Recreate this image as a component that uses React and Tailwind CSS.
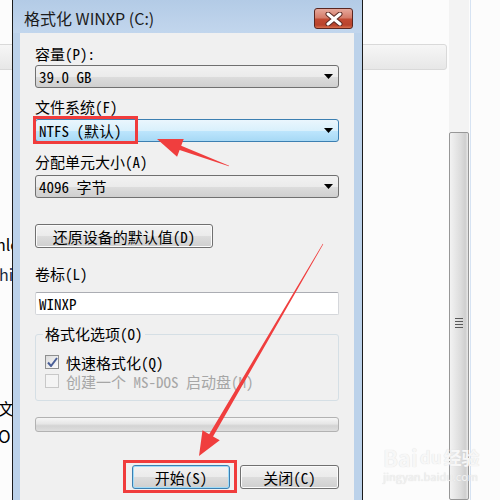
import React from "react";

const mono = "font-['Noto_Sans_Mono_CJK_SC','Noto_Sans_CJK_SC',monospace]";
const sans = "font-['Noto_Sans_CJK_SC','Noto_Sans',sans-serif]";

const arrowPoints = (tx, ty, hx, hy, headLen, headHalf, tailW, shaftW) => {
  const dx = hx - tx;
  const dy = hy - ty;
  const len = Math.hypot(dx, dy);
  const ux = dx / len;
  const uy = dy / len;
  const px = -uy;
  const py = ux;
  const bx = hx - ux * headLen;
  const by = hy - uy * headLen;
  const pts = [
    [tx + (px * tailW) / 2, ty + (py * tailW) / 2],
    [bx + (px * shaftW) / 2, by + (py * shaftW) / 2],
    [bx + px * headHalf, by + py * headHalf],
    [hx, hy],
    [bx - px * headHalf, by - py * headHalf],
    [bx - (px * shaftW) / 2, by - (py * shaftW) / 2],
    [tx - (px * tailW) / 2, ty - (py * tailW) / 2],
  ];
  return pts.map((p) => p.join(",")).join(" ");
};

const Combo = ({ value, focused }) => (
  <div
    className={`flex h-[23px] items-center justify-between rounded-[3px] border pl-[3px] pr-[5px] ${
      focused
        ? "border-[#3c7fb1] bg-[linear-gradient(#eaf6fd_0%,#d9f0fc_50%,#bee6fd_50%,#a7d9f5_100%)]"
        : "border-[#707070] bg-[linear-gradient(#f2f2f2_0%,#ebebeb_50%,#dddddd_50%,#cfcfcf_100%)]"
    }`}
  >
    <span className="text-[15px] leading-none text-black">{value}</span>
    <svg width="9" height="5" viewBox="0 0 9 5">
      <path d="M0 0h9L4.5 5z" fill="#000" />
    </svg>
  </div>
);

const Button = ({ children, width, isDefault }) => (
  <div
    className={`flex h-[24px] items-center justify-center rounded-[3px] border text-[15px] leading-none text-black ${width} ${
      isDefault
        ? "border-[#3c7fb1] shadow-[inset_0_0_0_1px_#9fdcf9] bg-[linear-gradient(#f2f2f2_0%,#ebebeb_50%,#dddddd_50%,#cfcfcf_100%)]"
        : "border-[#707070] shadow-[inset_0_0_0_1px_#fbfbfb] bg-[linear-gradient(#f2f2f2_0%,#ebebeb_50%,#dddddd_50%,#cfcfcf_100%)]"
    }`}
  >
    {children}
  </div>
);

const Checkbox = ({ checked, disabled, label }) => (
  <div className="flex h-[18px] items-center gap-[7px]">
    <div
      className={`flex h-[14px] w-[14px] items-center justify-center border ${
        disabled ? "border-[#c8c8c8] bg-[#f4f4f4]" : "border-[#8e8f8f] bg-[linear-gradient(135deg,#dcdcdc,#fbfbfb)]"
      }`}
    >
      {checked && (
        <svg width="11" height="10" viewBox="0 0 11 10">
          <path d="M1 5.5l3 3.5L10 1" fill="none" stroke="#4a5f97" strokeWidth="2" />
        </svg>
      )}
    </div>
    <span className={`text-[15px] leading-none ${disabled ? "text-[#a6a6a6]" : "text-black"}`}>{label}</span>
  </div>
);

export default function App() {
  return (
    <div className="relative h-[500px] w-[500px] overflow-hidden bg-[#fcfcfc]">
      {/* background window bits */}
      <div className="absolute left-[-10px] top-[44px] h-[26px] w-[457px] rounded-[3px] border border-[#d9d9d9] bg-[linear-gradient(#f6f6f6,#e7e7e7)]" />
      <div className={`absolute left-[-4px] top-[232px] text-[16px] text-black ${sans}`}>hlo</div>
      <div className={`absolute left-[-1px] top-[262px] text-[16px] text-[#1a2a40] ${sans}`}>hi</div>
      <div className={`absolute left-[-2px] top-[396px] text-[16px] text-black ${sans}`}>文</div>
      <div className={`absolute left-[-2px] top-[423px] text-[17px] text-black ${sans}`}>O</div>

      {/* scrollbar of window behind */}
      <div className="absolute left-[449px] top-0 flex h-[500px] w-[20px] flex-col bg-[#f3f3f3]">
        <div className="h-[132px]" />
        <div className="flex flex-1 items-start justify-center rounded-[2px] border border-[#979797] bg-[linear-gradient(90deg,#f2f2f2,#dcdcdc_60%,#cfcfcf_85%,#e8e8e8)] pt-[185px]">
          <div className="flex flex-col gap-[2px]">
            <div className="h-px w-[8px] bg-[#5a5a5a]" />
            <div className="h-px w-[8px] bg-[#5a5a5a]" />
            <div className="h-px w-[8px] bg-[#5a5a5a]" />
            <div className="h-px w-[8px] bg-[#5a5a5a]" />
          </div>
        </div>
      </div>
      <div className="absolute left-[470px] top-0 h-[500px] w-px bg-[#d6e3f3]" />

      {/* dialog window */}
      <div className={`absolute left-[12px] top-0 flex h-[520px] w-[351px] flex-col border-x border-x-[#1b1b1b] bg-[#bcd2ea] ${mono}`}>
        <div className="flex h-[33px] items-start justify-between bg-[linear-gradient(#b3cbe6,#c2d6ed)]">
          <div className={`pl-[11px] pt-[9px] text-[16px] leading-[18px] text-[#1c1c1c] ${sans}`}>格式化 WINXP (C:)</div>
          <div className="mr-[9px] mt-[8px] flex h-[21px] w-[39px] items-center justify-center rounded-[3px] border border-[#5a2620] bg-[linear-gradient(#e6a89b_0%,#d57d6b_45%,#c14a33_55%,#b8432c_85%,#d8704f_100%)]">
            <svg width="18" height="14" viewBox="0 0 18 14">
              <path d="M3 2l12 10M15 2L3 12" stroke="#5b2a24" strokeWidth="5" strokeLinecap="round" />
              <path d="M3 2l12 10M15 2L3 12" stroke="#ffffff" strokeWidth="3" strokeLinecap="round" />
            </svg>
          </div>
        </div>

        <div className="ml-[7px] mr-[8px] flex flex-1 flex-col bg-[#f0f0f0] px-[15px] pt-[12px]">
          <div className="h-[18px] text-[15px] leading-[18px] text-black">容量(P):</div>
          <div className="mt-[2px]">
            <Combo value="39.0 GB" />
          </div>
          <div className="mt-[10px] h-[18px] text-[15px] leading-[18px] text-black">文件系统(F)</div>
          <div className="mt-[3px]">
            <Combo value="NTFS (默认)" focused />
          </div>
          <div className="mt-[11px] h-[18px] text-[15px] leading-[18px] text-black">分配单元大小(A)</div>
          <div className="mt-[4px]">
            <Combo value="4096 字节" />
          </div>
          <div className="mt-[26px] flex">
            <Button width="w-[178px]">还原设备的默认值(D)</Button>
          </div>
          <div className="mt-[17px] h-[18px] text-[15px] leading-[18px] text-black">卷标(L)</div>
          <div className="mt-[9px] flex h-[23px] items-center rounded-[2px] border border-[#d5d7db] border-t-[#abadb3] bg-white pl-[3px] text-[15px] leading-none text-black">
            WINXP
          </div>
          <fieldset className="mt-[10px] h-[76px] rounded-[3px] border border-[#d5dfe5] pl-[9px]">
            <legend className="ml-[-2px] px-[2px] text-[15px] leading-[18px] text-black">格式化选项(O)</legend>
            <div className="mt-[10px] flex flex-col gap-[1px]">
              <Checkbox checked label="快速格式化(Q)" />
              <Checkbox disabled label="创建一个 MS-DOS 启动盘(M)" />
            </div>
          </fieldset>
          <div className="mt-[16px] h-[15px] rounded-[3px] border border-[#b2b2b2] bg-[linear-gradient(#f6f6f6_0%,#e6e6e6_45%,#d3d3d3_60%,#dedede_100%)]" />
          <div className="mt-[33px] flex justify-end gap-[10px]">
            <Button width="w-[98px]" isDefault>开始(S)</Button>
            <Button width="w-[99px]">关闭(C)</Button>
          </div>
        </div>
      </div>

      {/* annotations */}
      <div className="absolute left-[33px] top-[116px] h-[28px] w-[105px] border-[3px] border-[#f03c3c]" />
      <div className="absolute left-[123px] top-[460px] h-[33px] w-[114px] border-[3px] border-[#f03c3c]" />
      <svg className="pointer-events-none absolute left-0 top-0" width="500" height="500" viewBox="0 0 500 500">
        <polygon points={arrowPoints(229, 166, 157, 139, 25, 9.5, 0.8, 4.5)} fill="#f03e3e" />
        <polygon points={arrowPoints(323, 244, 199, 456, 24, 10, 0.5, 4.5)} fill="#f03e3e" />
      </svg>

      {/* watermark */}
      <div className={`pointer-events-none absolute left-[383px] top-[444px] flex flex-col items-start ${sans}`}>
        <div className="flex items-end gap-[2px] text-[22px] font-bold leading-[26px] text-[#f7f7f7] [text-shadow:0_0_1px_#d8d8d8]">
          <span>Bai</span>
          <span className="text-[17px]">du</span>
          <span className="text-[18px]">经验</span>
        </div>
        <div className="text-[11px] leading-[12px] text-[#f2f2f2] [text-shadow:0_0_1px_#d4d4d4]">jingyan.baidu.com</div>
      </div>
    </div>
  );
}
